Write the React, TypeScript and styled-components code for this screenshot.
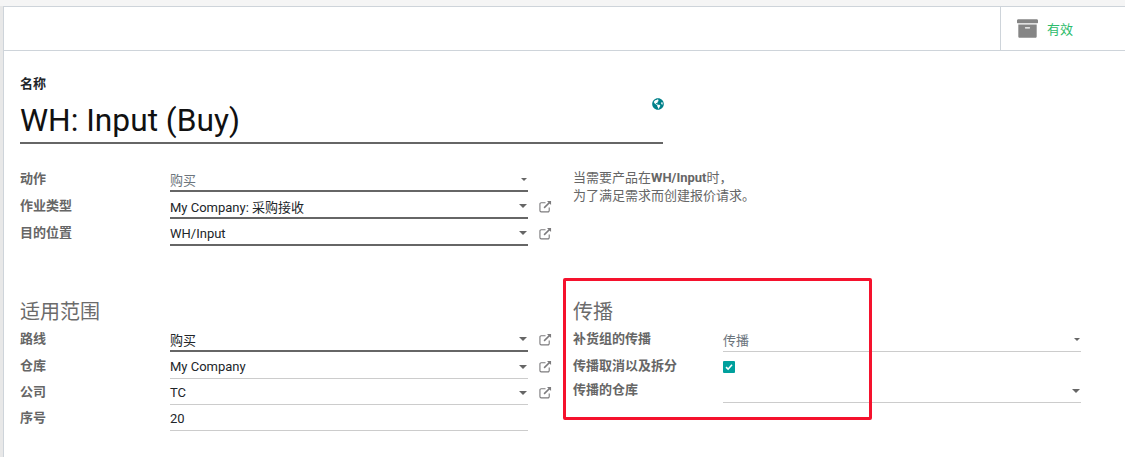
import React from "react";
import styled, { createGlobalStyle } from "styled-components";
import { FaArchive, FaGlobeAmericas } from "react-icons/fa";

const GlobalStyle = createGlobalStyle`
  html, body {
    margin: 0;
    padding: 0;
    background: #f5f5f5;
  }
  body {
    font-family: Roboto, "Noto Sans CJK SC", sans-serif;
    font-size: 13px;
    color: #212529;
  }
`;

const ExternalLink = () => (
  <StyledLinkIcon viewBox="0 0 14 14" fill="none" stroke="#7c7b7d" strokeWidth="1.2">
    <path d="M11 8v3.4a1.4 1.4 0 0 1-1.4 1.4H2.4A1.4 1.4 0 0 1 1 11.4V4.4A1.4 1.4 0 0 1 2.4 3H7" />
    <path d="M5.5 8.5 12 2" strokeWidth="1.6" />
    <path d="M8.6 1h4.4v4.4z" fill="#7c7b7d" stroke="none" />
  </StyledLinkIcon>
);

type FieldProps = {
  label: string;
  value?: string;
  muted?: boolean;
  active?: boolean;
  caret?: "small" | "large";
  link?: boolean;
  height?: number;
};

const Field = ({ label, value, muted, active, caret, link, height = 27 }: FieldProps) => (
  <StyledRow $height={height}>
    <StyledLabel>{label}</StyledLabel>
    <StyledInput $active={active} $muted={muted}>
      <span>{value}</span>
      {caret && <StyledCaret $small={caret === "small"} />}
    </StyledInput>
    <StyledLinkCell>{link && <ExternalLink />}</StyledLinkCell>
  </StyledRow>
);

const App = () => {
  return (
    <>
      <GlobalStyle />
      <StyledPage>
        <StyledSheet>
          <StyledHeader>
            <StyledStatusButton>
              <FaArchive size={21} color="#858585" />
              <span>有效</span>
            </StyledStatusButton>
          </StyledHeader>
          <StyledBody>
            <StyledNameLabel>名称</StyledNameLabel>
            <StyledTitle>
              WH: Input (Buy)
              <StyledGlobe>
                <FaGlobeAmericas size={12} color="#00818a" />
              </StyledGlobe>
            </StyledTitle>

            <StyledColumns>
              <StyledGroup>
                <Field label="动作" value="购买" muted active caret="small" />
                <Field label="作业类型" value="My Company: 采购接收" active caret="large" link />
                <Field label="目的位置" value="WH/Input" active caret="large" link />
              </StyledGroup>
              <StyledHelp>
                当需要产品在<b>WH/Input</b>时，
                <br />
                为了满足需求而创建报价请求。
              </StyledHelp>
            </StyledColumns>

            <StyledLowerColumns>
              <StyledGroup>
                <StyledGroupTitle>适用范围</StyledGroupTitle>
                <Field label="路线" value="购买" active caret="large" link />
                <Field label="仓库" value="My Company" caret="large" link height={26} />
                <Field label="公司" value="TC" caret="large" link height={26} />
                <Field label="序号" value="20" />
              </StyledGroup>
              <StyledWideGroup>
                <StyledGroupTitle>传播</StyledGroupTitle>
                <StyledWideRow>
                  <StyledLabel>补货组的传播</StyledLabel>
                  <StyledInput $muted>
                    <span>传播</span>
                    <StyledCaret $small />
                  </StyledInput>
                </StyledWideRow>
                <StyledWideRow $height={24}>
                  <StyledLabel>传播取消以及拆分</StyledLabel>
                  <StyledCheckCell>
                    <StyledCheckbox>
                      <svg width="8" height="8" viewBox="0 0 8 8" fill="none" stroke="#fff" strokeWidth="1.6">
                        <path d="M1 4.2 3.1 6.2 7 1.8" />
                      </svg>
                    </StyledCheckbox>
                  </StyledCheckCell>
                </StyledWideRow>
                <StyledWideRow>
                  <StyledLabel>传播的仓库</StyledLabel>
                  <StyledInput>
                    <span />
                    <StyledCaret />
                  </StyledInput>
                </StyledWideRow>
                <StyledHighlight />
              </StyledWideGroup>
            </StyledLowerColumns>
          </StyledBody>
        </StyledSheet>
      </StyledPage>
    </>
  );
};

export default App;

const StyledPage = styled.div`
  margin-top: 6px;
  padding-left: 3px;
  background: #e8e8e8;
`;

const StyledSheet = styled.div`
  height: 451px;
  background: #fff;
  border-top: 1px solid #ced4da;
  border-left: 1px solid #ced4da;
  box-sizing: border-box;
  overflow: hidden;
`;

const StyledHeader = styled.div`
  height: 43px;
  display: flex;
  justify-content: flex-end;
  border-bottom: 1px solid #ced4da;
`;

const StyledStatusButton = styled.div`
  width: 125px;
  display: flex;
  align-items: center;
  gap: 9px;
  padding-left: 16px;
  box-sizing: border-box;
  border-left: 1px solid #ced4da;
  color: #2dbb6b;
  font-size: 13px;
`;

const StyledBody = styled.div`
  padding: 25px 0 0 16px;
`;

const StyledNameLabel = styled.div`
  font-size: 13px;
  font-weight: 700;
  line-height: 16px;
  color: #212529;
`;

const StyledTitle = styled.div`
  position: relative;
  width: 643px;
  height: 44px;
  margin-top: 8px;
  box-sizing: border-box;
  border-bottom: 2px solid #666;
  font-size: 31.7px;
  line-height: 41px;
  color: #111;
`;

const StyledGlobe = styled.span`
  position: absolute;
  top: -2px;
  right: -1px;
  line-height: 0;
`;

const StyledColumns = styled.div`
  display: flex;
  gap: 20px;
  margin-top: 24px;
`;

const StyledLowerColumns = styled(StyledColumns)`
  margin-top: 50px;
`;

const StyledGroup = styled.div`
  width: 533px;
`;

const StyledWideGroup = styled.div`
  position: relative;
  width: 508px;
`;

const StyledGroupTitle = styled.div`
  height: 29px;
  font-size: 20px;
  line-height: 27px;
  color: #6b6b6b;
`;

const StyledRow = styled.div<{ $height: number }>`
  display: grid;
  grid-template-columns: 150px 358px 25px;
  height: ${(p) => p.$height}px;
`;

const StyledWideRow = styled.div<{ $height?: number }>`
  display: grid;
  grid-template-columns: 150px 358px;
  height: ${(p) => p.$height ?? 27}px;
`;

const StyledLabel = styled.div`
  font-weight: 700;
  font-size: 13px;
  line-height: 18px;
  padding-top: 2px;
  color: #666;
`;

const StyledInput = styled.div<{ $active?: boolean; $muted?: boolean }>`
  height: 24px;
  display: flex;
  align-items: center;
  justify-content: space-between;
  box-sizing: border-box;
  padding-right: 1px;
  font-size: 13px;
  color: ${(p) => (p.$muted ? "#6c757d" : "#212529")};
  border-bottom: ${(p) => (p.$active ? "2px solid #666" : "1px solid #ccc")};
`;

const StyledCaret = styled.i<{ $small?: boolean }>`
  display: block;
  width: 0;
  height: 0;
  border-style: solid;
  border-color: #666 transparent transparent;
  border-width: ${(p) => (p.$small ? "3px 3px 0" : "4px 4px 0")};
`;

const StyledLinkCell = styled.div`
  display: flex;
  justify-content: flex-end;
  padding: 5px 1px 0 0;
  box-sizing: border-box;
`;

const StyledLinkIcon = styled.svg`
  width: 13px;
  height: 13px;
`;

const StyledHelp = styled.div`
  color: #666;
  font-size: 13px;
  line-height: 18px;
  margin-top: 1px;
`;

const StyledCheckCell = styled.div`
  display: flex;
  align-items: flex-start;
  padding-top: 6px;
`;

const StyledCheckbox = styled.span`
  width: 12px;
  height: 12px;
  display: flex;
  align-items: center;
  justify-content: center;
  background: #00a09d;
  border-radius: 1px;
`;

const StyledHighlight = styled.div`
  position: absolute;
  top: -21px;
  left: -10px;
  width: 309px;
  height: 142px;
  box-sizing: border-box;
  border: 3px solid #f5122d;
  border-radius: 2px;
  pointer-events: none;
`;
